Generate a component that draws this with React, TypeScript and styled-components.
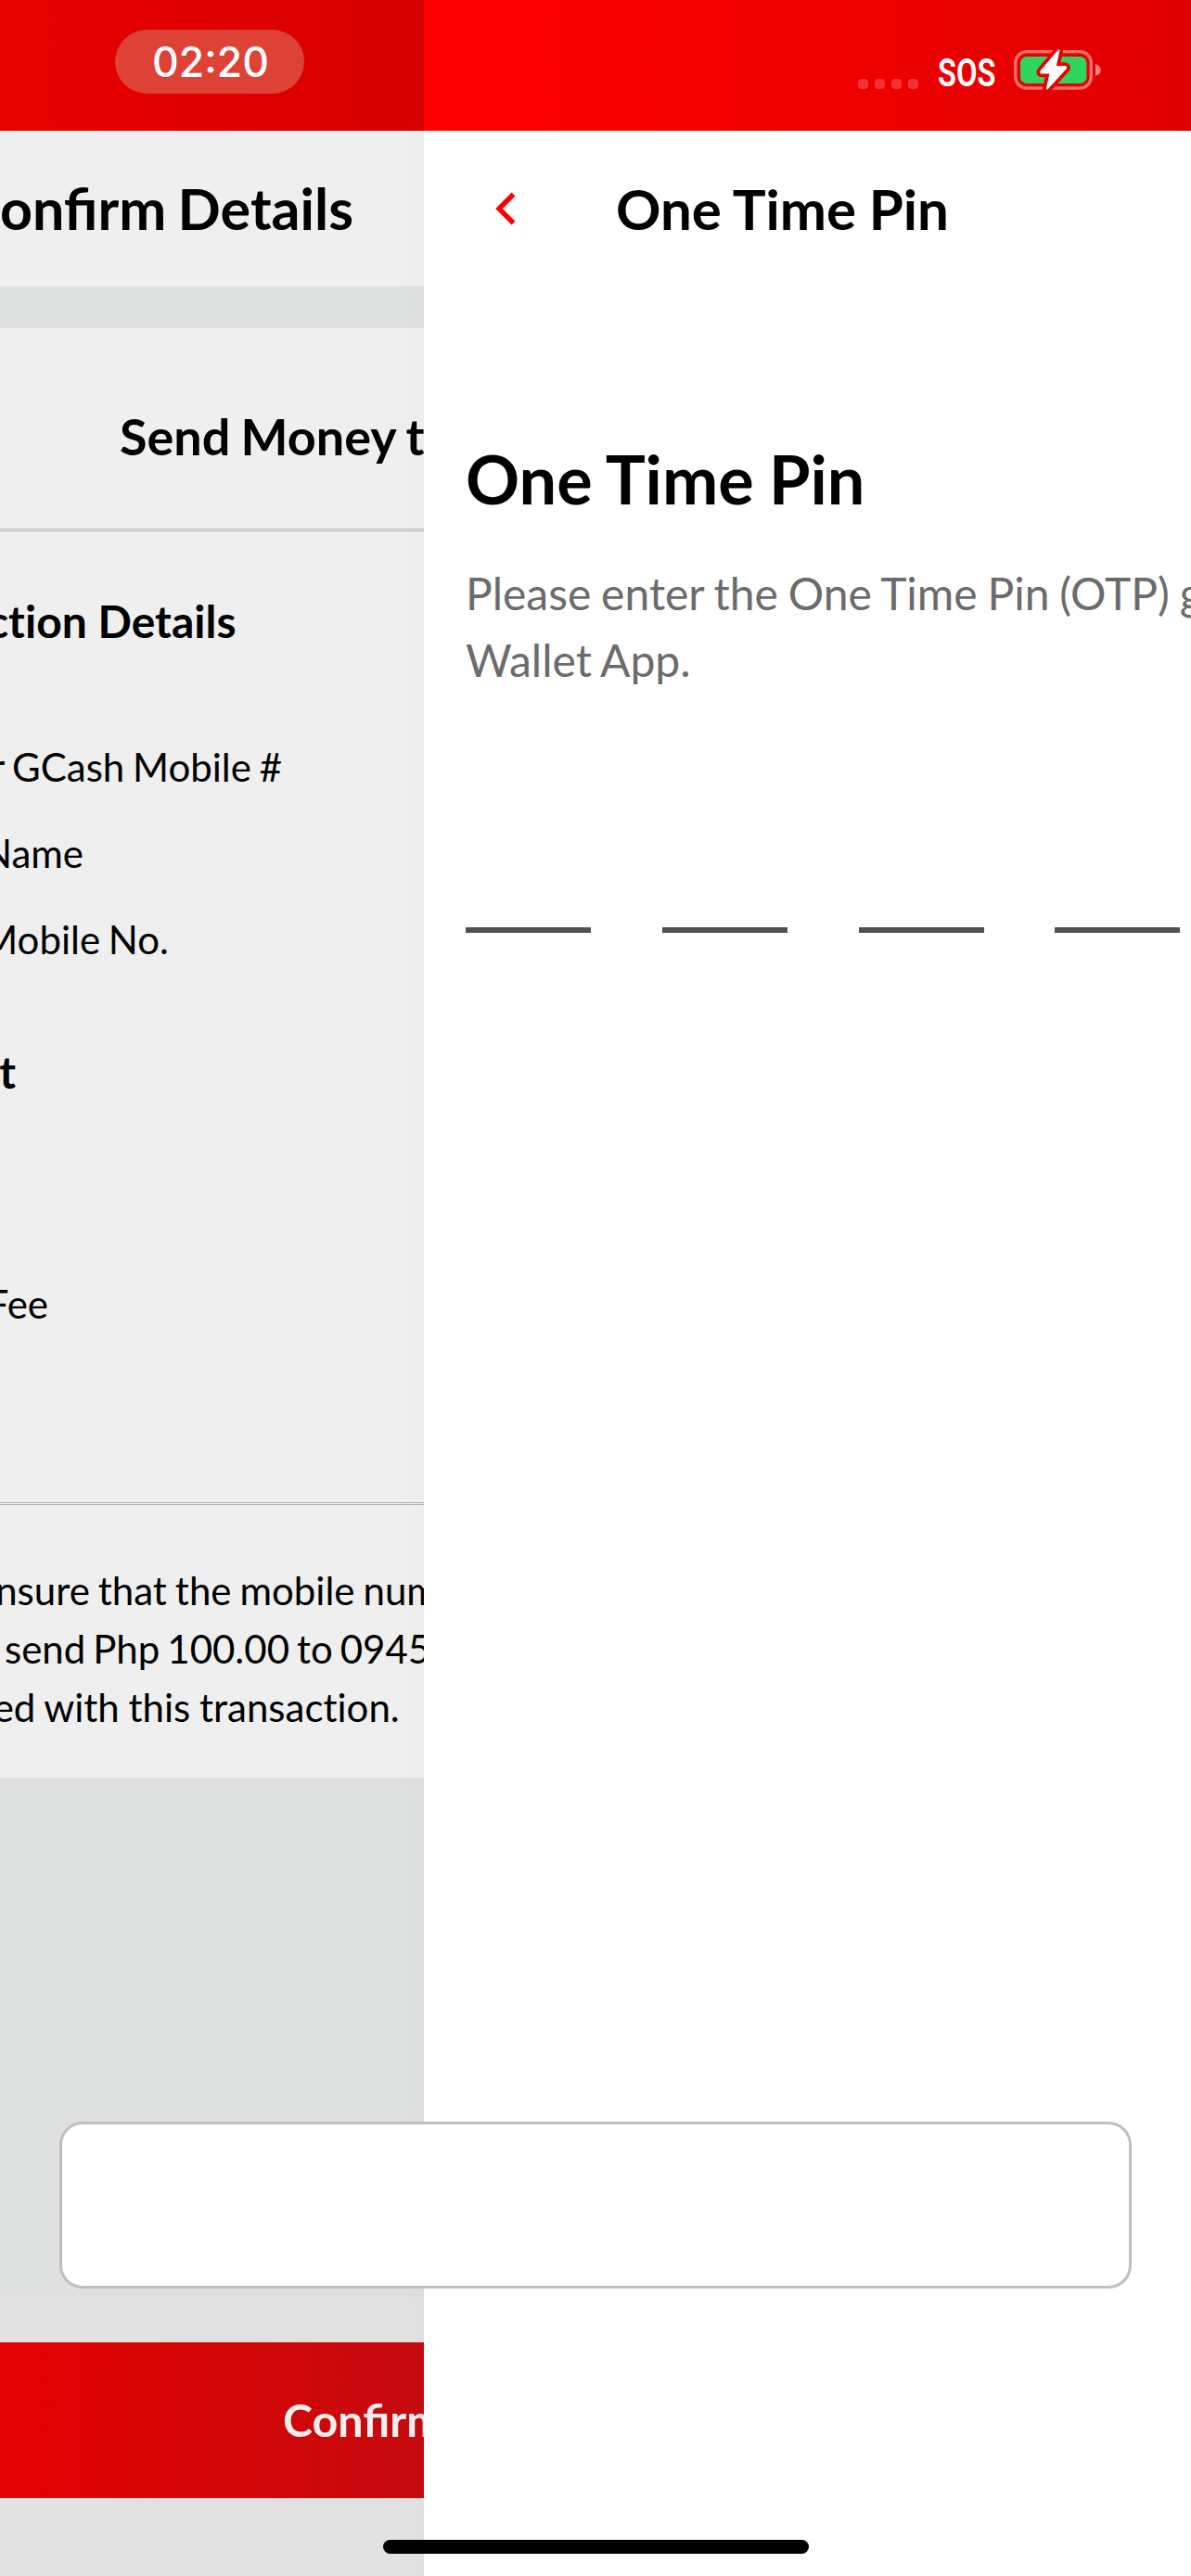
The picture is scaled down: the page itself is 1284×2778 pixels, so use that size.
import React from "react";
import styled, { createGlobalStyle } from "styled-components";

const Global = createGlobalStyle`
  * { box-sizing: border-box; }
  body { margin: 0; background: #fff; font-family: Lato, "Liberation Sans", sans-serif; color: #000; }
`;

const Phone = styled.main`
  position: relative;
  width: 1284px;
  height: 2778px;
  overflow: hidden;
  display: flex;
`;

const UnderScreen = styled.section`
  position: relative;
  width: 457px;
  flex: none;
  overflow: hidden;
  display: flex;
  flex-direction: column;
  background: #dfe1e0;
`;

const EdgeShadow = styled.div`
  position: absolute;
  top: 0;
  right: 0;
  width: 30px;
  height: 100%;
  background: linear-gradient(90deg, rgba(0, 0, 0, 0), rgba(0, 0, 0, 0.012));
`;

const TopScreen = styled.section`
  width: 827px;
  flex: none;
  overflow: hidden;
  display: flex;
  flex-direction: column;
  background: #fff;
`;

const StatusStrip = styled.div<{ $from: string; $to: string }>`
  height: 141px;
  flex: none;
  display: flex;
  background: linear-gradient(90deg, ${(p) => p.$from}, ${(p) => p.$to});
`;

const TimePill = styled.div`
  width: 204px;
  height: 69px;
  margin: 32px 0 0 124px;
  padding: 1px 0 0 2px;
  border-radius: 35px;
  background: #de4136;
  color: #fff;
  display: flex;
  align-items: center;
  justify-content: center;
  font: 500 44.5px/69px Inter, sans-serif;
`;

const StatusIcons = styled.div`
  display: flex;
  width: 100%;
  padding: 46px 94px 0 0;
  justify-content: flex-end;
`;

const SignalDots = styled.div`
  display: flex;
  gap: 7px;
  margin: 39px 21px 0 0;
`;

const Dot = styled.span`
  width: 11px;
  height: 11px;
  border-radius: 4px;
  background: rgba(255, 255, 255, 0.2);
`;

const Sos = styled.span`
  width: 65px;
  margin: 7px 10px 0 0;
  color: #fff;
  font: 600 43px/50px Roboto, sans-serif;
  transform: scaleX(0.76);
  transform-origin: left center;
`;

const BatteryIcon = styled.svg`
  width: 104px;
  height: 56px;
  flex: none;
`;

const Header = styled.header<{ $dim?: boolean }>`
  height: 168px;
  flex: none;
  display: flex;
  align-items: center;
  background: ${(p) => (p.$dim ? "#efefef" : "#fff")};
`;

const HeaderTitle = styled.h1`
  margin: 0 0 0 108px;
  font-size: 60px;
  line-height: 72px;
  font-weight: 700;
  word-spacing: -0.9px;
  white-space: nowrap;
`;

const SlidTitle = styled(HeaderTitle)`
  display: flex;
  justify-content: flex-end;
  width: 381px;
  margin: 0;
  font-size: 61px;
  word-spacing: -2.5px;
`;

const BackIcon = styled.svg`
  width: 22px;
  height: 36px;
  margin: 0 0 0 77px;
`;

const Card = styled.div`
  margin-top: 45px;
  height: 1563px;
  flex: none;
  display: flex;
  flex-direction: column;
  background: #efefef;
`;

const CardTitle = styled.h2`
  height: 216px;
  margin: 0;
  padding: 81px 0 0 129px;
  font-size: 54px;
  line-height: 72px;
  font-weight: 700;
  word-spacing: -2px;
  white-space: nowrap;
`;

const Rule = styled.div`
  height: 3px;
  flex: none;
  border: solid #b2b4b3;
  border-width: 1px 0;
`;

const Details = styled.div`
  height: 1047px;
  flex: none;
  display: flex;
  flex-direction: column;
  font-variant-ligatures: none;
`;

const GroupTitle = styled.h3<{ $edge: number; $top: number }>`
  display: flex;
  justify-content: flex-end;
  width: ${(p) => p.$edge}px;
  height: 60px;
  flex: none;
  margin: ${(p) => p.$top}px 0 0;
  font-size: 48px;
  line-height: 60px;
  font-weight: 700;
  white-space: nowrap;
`;

const Label = styled.div<{ $edge: number; $top: number }>`
  display: flex;
  justify-content: flex-end;
  width: ${(p) => p.$edge}px;
  height: 60px;
  flex: none;
  margin-top: ${(p) => p.$top}px;
  font-size: 42px;
  line-height: 60px;
  word-spacing: -2px;
  white-space: nowrap;
`;

const Notice = styled.div`
  padding-top: 61px;
  display: flex;
  flex-direction: column;
  font-variant-ligatures: none;
`;

const NoticeLine = styled.div<{ $indent: number; $gap: number }>`
  text-indent: ${(p) => p.$indent}px;
  word-spacing: ${(p) => p.$gap}px;
  font-size: 42px;
  line-height: 63px;
  white-space: nowrap;
`;

const Footer = styled.footer`
  margin-top: auto;
  height: 300px;
  flex: none;
  padding: 48px 0 84px;
  background: #e2e2e2;
`;

const ConfirmButton = styled.button`
  display: block;
  width: 457px;
  height: 168px;
  padding: 0 0 2px 305px;
  border: 0;
  background: linear-gradient(90deg, #e40202, #c50a0e);
  color: #efefef;
  font: 700 48.4px/60px Lato, sans-serif;
  text-align: left;
  white-space: nowrap;
  overflow: hidden;
`;

const PinBody = styled.div`
  padding: 162px 0 0 45px;
`;

const PinTitle = styled.h2`
  margin: 0;
  font-size: 72px;
  line-height: 90px;
  font-weight: 700;
  word-spacing: -1.2px;
  white-space: nowrap;
`;

const PinText = styled.p`
  margin: 43px 0 0;
  color: #6b6b6b;
  font-size: 48px;
  line-height: 72px;
  word-spacing: -1.5px;
  white-space: nowrap;
`;

const PinSlots = styled.div`
  display: flex;
  gap: 76.8px;
  margin-top: 252px;
`;

const Slot = styled.span`
  width: 135px;
  height: 6px;
  flex: none;
  background: #505050;
`;

const FloatingField = styled.div`
  position: absolute;
  left: 64px;
  top: 2288px;
  width: 1156px;
  height: 180px;
  border: 3px solid #bfbfbf;
  border-radius: 25px;
  background: #fff;
`;

const HomeIndicator = styled.div`
  position: absolute;
  left: 413px;
  bottom: 24px;
  width: 459px;
  height: 15px;
  border-radius: 8px;
  background: #000;
`;

const bolt = "M55.4 8.5 L36.4 31 Q35.6 32.6 37.4 32.6 L46.6 32.6 L42.8 49.6 L63 27.6 Q63.8 26 62 26 L51.6 26 Z";

function Battery() {
  return (
    <BatteryIcon viewBox="0 0 104 56">
      <rect x="8.75" y="9.75" width="81.5" height="39.25" rx="12" fill="none" stroke="#f06a6a" strokeWidth="3.5" />
      <rect x="14" y="15" width="71.5" height="29" rx="7" fill="#30d35b" />
      <path d="M95 23 Q100.8 25 100.8 29.5 Q100.8 34 95 36 Z" fill="#f18080" />
      <path d={bolt} fill="#e60000" stroke="#e60000" strokeWidth="9.5" strokeLinejoin="round" />
      <path d={bolt} fill="#fff" stroke="#fff" strokeWidth="2" strokeLinejoin="round" />
    </BatteryIcon>
  );
}

export default function App() {
  return (
    <>
      <Global />
      <Phone>
        <UnderScreen>
          <StatusStrip $from="#e80000" $to="#d70000">
            <TimePill>02:20</TimePill>
          </StatusStrip>
          <Header $dim>
            <SlidTitle>Confirm Details</SlidTitle>
          </Header>
          <Card>
            <CardTitle>Send Money to</CardTitle>
            <Rule />
            <Details>
              <GroupTitle $edge={254.5} $top={67}>Transaction Details</GroupTitle>
              <Label $edge={304} $top={97}>Receiver GCash Mobile #</Label>
              <Label $edge={90} $top={33}>Name</Label>
              <Label $edge={182} $top={33}>Mobile No.</Label>
              <GroupTitle $edge={17} $top={83}>Amount</GroupTitle>
              <Label $edge={52} $top={190}>Fee</Label>
            </Details>
            <Rule />
            <Notice>
              <NoticeLine $indent={-27} $gap={-1.8}>ensure that the mobile number</NoticeLine>
              <NoticeLine $indent={5} $gap={-2.8}>send Php 100.00 to 0945</NoticeLine>
              <NoticeLine $indent={-111} $gap={-1}>proceed with this transaction.</NoticeLine>
            </Notice>
          </Card>
          <Footer>
            <ConfirmButton>Confirm</ConfirmButton>
          </Footer>
          <EdgeShadow />
        </UnderScreen>
        <TopScreen>
          <StatusStrip $from="#ff0000" $to="#e00000">
            <StatusIcons>
              <SignalDots>
                <Dot />
                <Dot />
                <Dot />
                <Dot />
              </SignalDots>
              <Sos>SOS</Sos>
              <Battery />
            </StatusIcons>
          </StatusStrip>
          <Header>
            <BackIcon viewBox="0 0 22 36">
              <path d="M19.5 2.5 L4 18 L19.5 33.5" fill="none" stroke="#ff0000" strokeWidth="5.4" />
            </BackIcon>
            <HeaderTitle>One Time Pin</HeaderTitle>
          </Header>
          <PinBody>
            <PinTitle>One Time Pin</PinTitle>
            <PinText>
              Please enter the One Time Pin (OTP) g
              <br />
              Wallet App.
            </PinText>
            <PinSlots>
              <Slot />
              <Slot />
              <Slot />
              <Slot />
            </PinSlots>
          </PinBody>
        </TopScreen>
        <FloatingField />
        <HomeIndicator />
      </Phone>
    </>
  );
}
